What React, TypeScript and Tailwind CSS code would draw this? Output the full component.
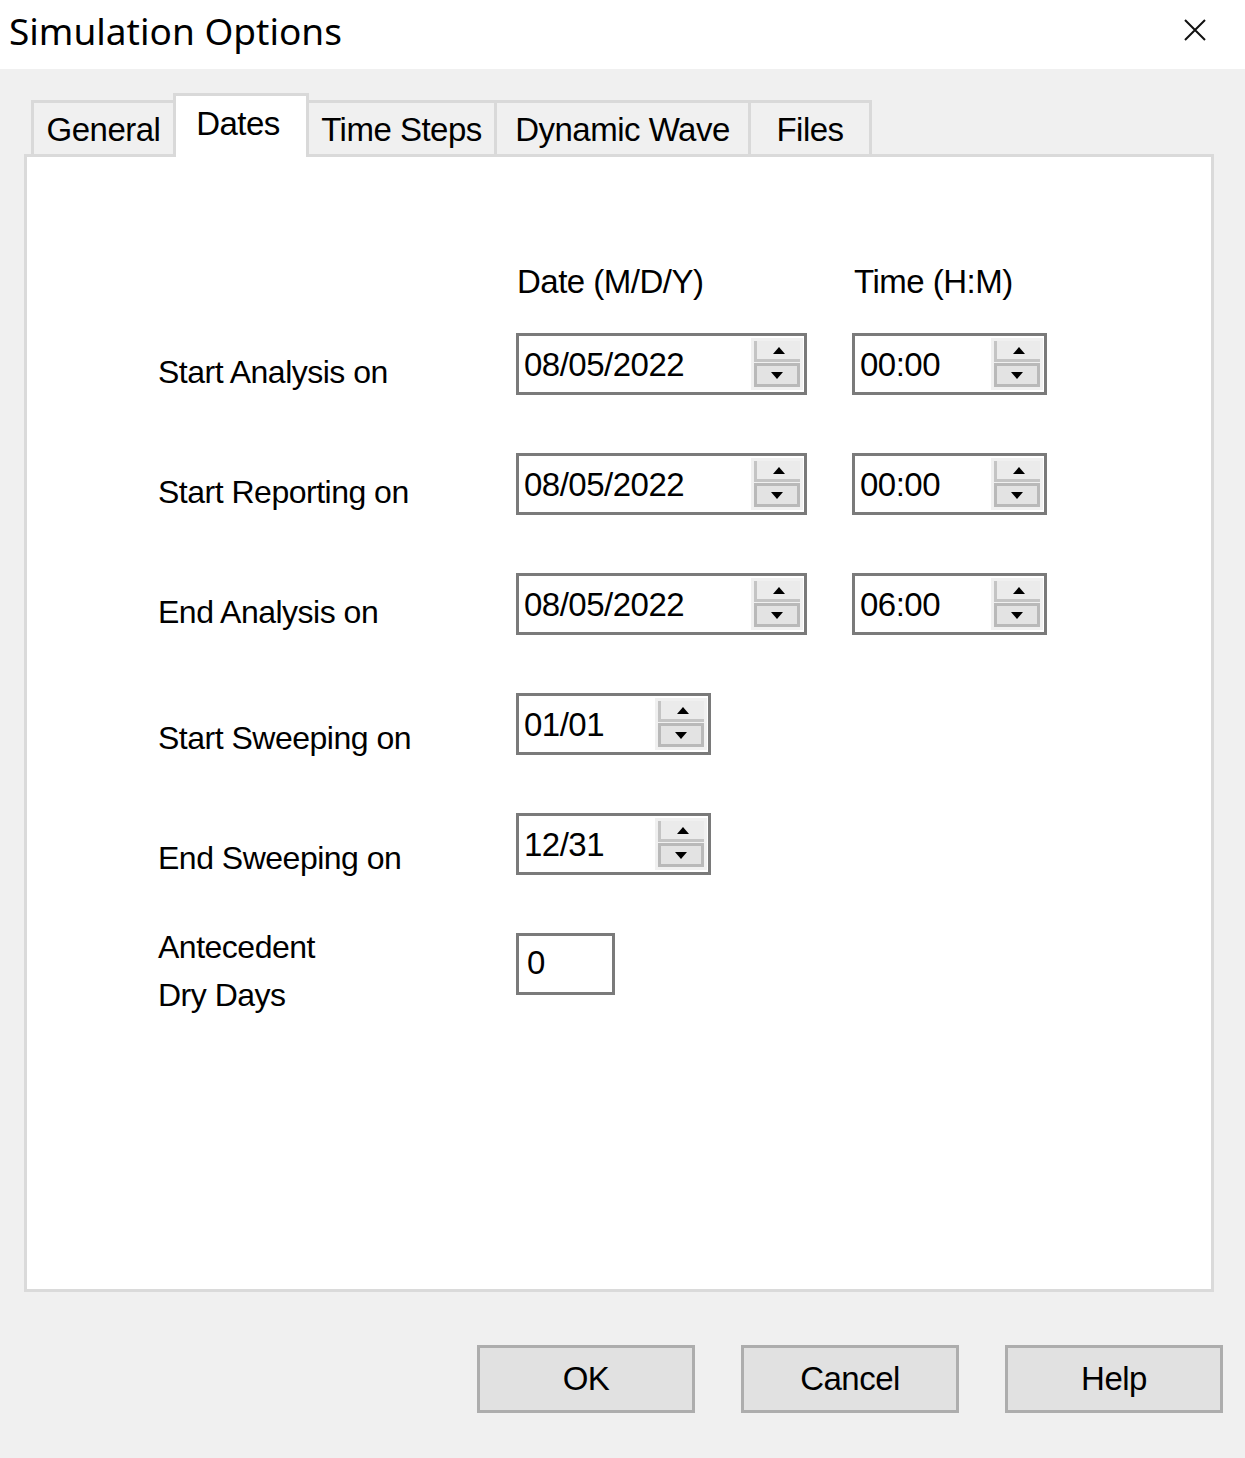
const ui = { fontFamily: '"Liberation Sans", Arial, sans-serif' };

function Spinner() {
  return (
    <div className="flex flex-col gap-[1px] w-[52px] h-[52px] bg-[#f0f0f0] p-[3px] mr-[1px]">
      <div className="flex-1 flex items-center justify-center border-l-[3px] border-b-[3px] border-[#c4c4c4] bg-[#ebebeb]">
        <svg width="12" height="7" viewBox="0 0 12 7">
          <polygon points="6,0 12,7 0,7" fill="#000" />
        </svg>
      </div>
      <div className="flex-1 flex items-center justify-center border-[3px] border-[#b9b9b9] bg-[#e3e3e3]">
        <svg width="12" height="7" viewBox="0 0 12 7">
          <polygon points="0,0 12,0 6,7" fill="#000" />
        </svg>
      </div>
    </div>
  );
}

function SpinBox({ value, width }: { value: string; width: string }) {
  return (
    <div className={`${width} h-[62px] border-[3px] border-[#7a7a7a] bg-white flex items-center justify-between pl-[5px]`}>
      <span className="text-[33px] leading-none tracking-[-0.5px] text-black">{value}</span>
      <Spinner />
    </div>
  );
}

const rows = [
  { label: 'Start Analysis on', date: '08/05/2022', time: '00:00' },
  { label: 'Start Reporting on', date: '08/05/2022', time: '00:00' },
  { label: 'End Analysis on', date: '08/05/2022', time: '06:00' },
];

const tabs = ['General', 'Dates', 'Time Steps', 'Dynamic Wave', 'Files'];
const tabW = ['w-[145px]', 'w-[136px]', 'w-[191px]', 'w-[257px]', 'w-[124px]'];

export default function App() {
  return (
    <div className="w-[1245px] h-[1458px] bg-[#f0f0f0] flex flex-col" style={ui}>
      {/* title bar */}
      <div className="h-[69px] bg-white flex items-center justify-between pl-[9px] pr-[39px] shrink-0">
        <span className="text-[37px] text-black -mt-[7px]" style={{ fontFamily: '"Noto Sans", "Open Sans", sans-serif' }}>
          Simulation Options
        </span>
        <svg width="22" height="22" viewBox="0 0 22 22" className="-mt-[10px]">
          <path d="M1 1 L21 21 M21 1 L1 21" stroke="#111" strokeWidth="2" />
        </svg>
      </div>

      <div className="pl-[24px] pr-[31px] pt-[24px]">
        {/* tabs */}
        <div className="flex items-end pl-[7px] h-[61px]">
          {tabs.map((t, i) =>
            i === 1 ? (
              <div
                key={t}
                className={`${tabW[i]} -ml-[3px] h-[64px] -mb-[3px] relative z-10 bg-white border-[3px] border-b-0 border-[#d9d9d9] flex items-start justify-center pt-[8px] pr-[6px]`}
              >
                <span className="text-[33px] tracking-[-0.5px] leading-[40px]">{t}</span>
              </div>
            ) : (
              <div
                key={t}
                className={`${tabW[i]} ${i > 1 ? '-ml-[3px]' : ''} h-[54px] bg-[#f0f0f0] border-[3px] border-b-0 border-[#d9d9d9] flex items-center justify-center`}
              >
                <span className="text-[33px] tracking-[-0.5px] leading-[40px] mt-[2px]">{t}</span>
              </div>
            )
          )}
        </div>

        {/* panel */}
        <div className="h-[1138px] border-[3px] border-[#dadada] bg-white pl-[131px] pt-[103px] text-black">
          <div className="flex h-[44px] items-center">
            <span className="w-[359px]" />
            <span className="w-[337px] text-[33px] tracking-[-0.5px]">Date (M/D/Y)</span>
            <span className="text-[33px] tracking-[-0.5px]">Time (H:M)</span>
          </div>

          <div className="flex flex-col gap-[58px] mt-[29px]">
            {rows.map((r) => (
              <div key={r.label} className="flex items-start h-[62px]">
                <span className="w-[358px] text-[32px] tracking-[-0.5px] leading-[40px] mt-[19px]">{r.label}</span>
                <SpinBox value={r.date} width="w-[291px]" />
                <div className="w-[45px]" />
                <SpinBox value={r.time} width="w-[195px]" />
              </div>
            ))}
            <div className="flex items-start h-[62px]">
              <span className="w-[358px] text-[32px] tracking-[-0.5px] leading-[40px] mt-[25px]">Start Sweeping on</span>
              <SpinBox value="01/01" width="w-[195px]" />
            </div>
            <div className="flex items-start h-[62px]">
              <span className="w-[358px] text-[32px] tracking-[-0.5px] leading-[40px] mt-[25px]">End Sweeping on</span>
              <SpinBox value="12/31" width="w-[195px]" />
            </div>
            <div className="flex items-start">
              <span className="w-[358px] text-[32px] tracking-[-0.5px] leading-[48px] -mt-[10px]">
                Antecedent
                <br />
                Dry Days
              </span>
              <div className="w-[99px] h-[62px] border-[3px] border-[#7a7a7a] bg-white flex items-center pl-[8px]">
                <span className="text-[33px] leading-none -mt-[4px]">0</span>
              </div>
            </div>
          </div>
        </div>
      </div>

      {/* buttons */}
      <div className="flex justify-end gap-[46px] pr-[22px] mt-[53px]">
        {['OK', 'Cancel', 'Help'].map((b) => (
          <button
            key={b}
            className="w-[218px] h-[68px] bg-[#e1e1e1] border-[3px] border-[#adadad] flex items-center justify-center text-[33px] tracking-[-0.5px] text-black"
          >
            {b}
          </button>
        ))}
      </div>
    </div>
  );
}
